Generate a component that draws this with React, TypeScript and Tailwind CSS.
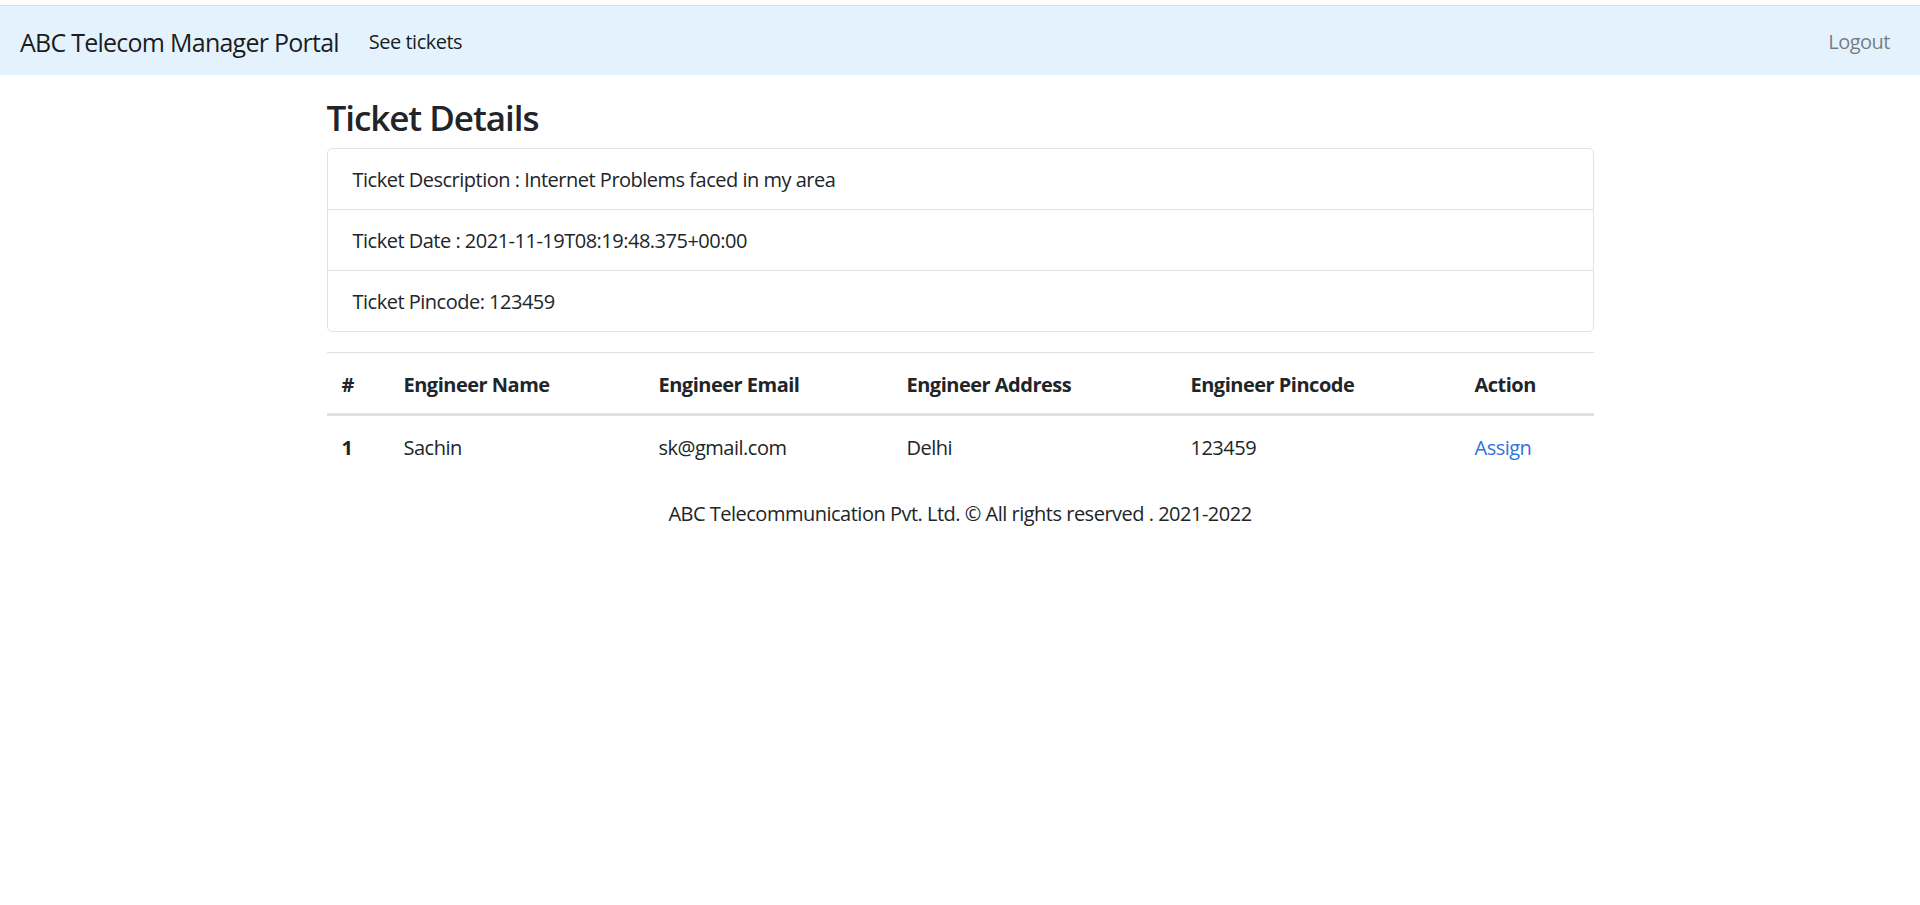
import React from "react";

export default function App() {
  const cols = [62, 255, 248, 284, 284, 134];
  const th = "text-left font-bold px-[15px] pt-[17px] pb-[13px]";
  const td = "px-[15px] pt-[17px] pb-[13px]";
  return (
    <div className="min-h-[905px] bg-white text-[#212529] text-[20px] leading-[30px] tracking-[-0.025em] font-['Open_Sans','Noto_Sans',sans-serif]">
      <div className="h-[5px] bg-white" />
      <nav className="h-[70px] border-t border-[#dcdfe3] bg-[#e3f2fd] flex items-center justify-between px-[20px] pt-[3px]">
        <div className="flex items-center">
          <span className="text-[25px] leading-[37px] tracking-[-0.03em] text-[rgba(0,0,0,0.9)] mr-[20px]">ABC Telecom Manager Portal</span>
          <span className="px-[10px] text-[rgba(0,0,0,0.9)]">See tickets</span>
        </div>
        <span className="px-[10px] text-[rgba(0,0,0,0.5)]">Logout</span>
      </nav>
      <main className="w-[1267px] mx-auto">
        <h3 className="mt-[22px] mb-[9px] text-[35px] leading-[42px] font-semibold tracking-[-0.03em]">Ticket Details</h3>
        <ul className="border border-[#dfe2e6] rounded-[5px]">
          <li className="px-[25px] pt-[16px] pb-[14px] border-b border-[#dfe2e6]">Ticket Description : Internet Problems faced in my area</li>
          <li className="px-[25px] pt-[16px] pb-[14px] border-b border-[#dfe2e6]">Ticket Date : 2021-11-19T08:19:48.375+00:00</li>
          <li className="px-[25px] pt-[16px] pb-[14px]">Ticket Pincode: 123459</li>
        </ul>
        <table className="mt-[20px] mb-[20px] w-full table-fixed border-collapse">
          <colgroup>
            {cols.map((w, i) => (
              <col key={i} style={{ width: w }} />
            ))}
          </colgroup>
          <thead>
            <tr className="border-t border-[#dee2e6] border-b-[3px] border-b-[#dee2e6]">
              <th className={th}>#</th>
              <th className={th}>Engineer Name</th>
              <th className={th}>Engineer Email</th>
              <th className={th}>Engineer Address</th>
              <th className={th}>Engineer Pincode</th>
              <th className={th}>Action</th>
            </tr>
          </thead>
          <tbody>
            <tr>
              <td className={td + " font-bold"}>1</td>
              <td className={td}>Sachin</td>
              <td className={td}>sk@gmail.com</td>
              <td className={td}>Delhi</td>
              <td className={td}>123459</td>
              <td className={td + " text-[#2f74e0]"}>Assign</td>
            </tr>
          </tbody>
        </table>
      </main>
      <footer className="text-center pt-[3px]">ABC Telecommunication Pvt. Ltd. © All rights reserved . 2021-2022</footer>
    </div>
  );
}
